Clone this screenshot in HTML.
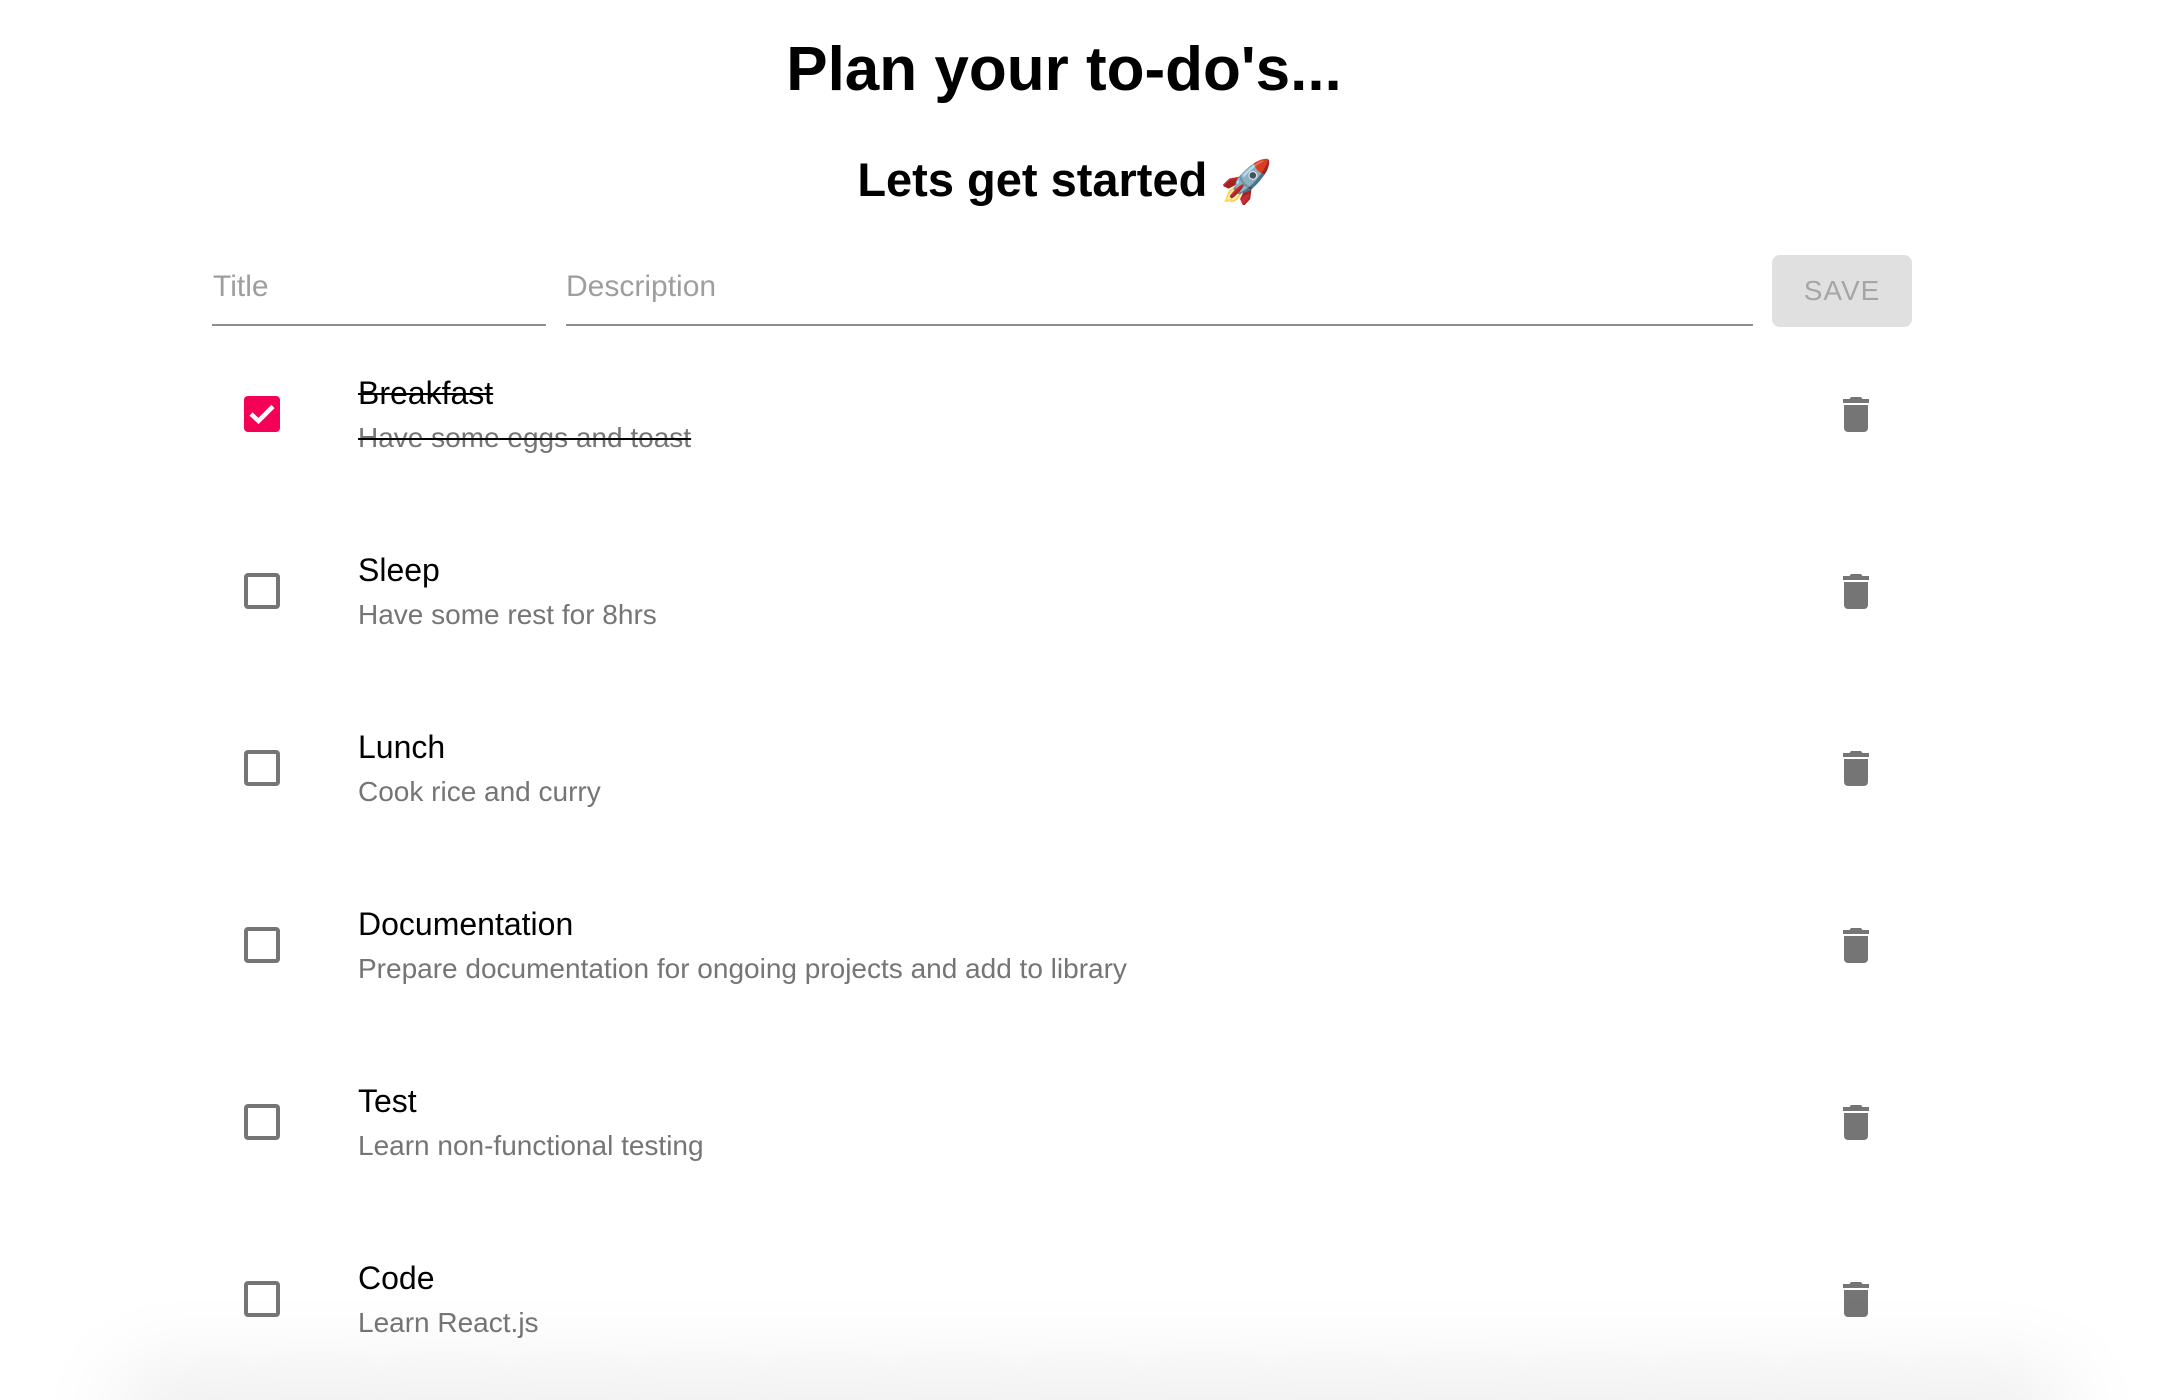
<!DOCTYPE html>
<html><head><meta charset="utf-8"><style>
*{margin:0;padding:0;box-sizing:border-box}
html,body{width:2184px;height:1400px;overflow:hidden;background:#fff;font-family:"Liberation Sans",Arial,sans-serif}
#w{position:relative;width:2184px;height:1400px;overflow:hidden}
.a{position:absolute;white-space:nowrap}
h1{position:absolute;left:-28px;width:2184px;text-align:center;top:34px;font-size:62px;font-weight:bold;color:#000;line-height:72px}
h2{position:absolute;left:-27px;width:2184px;text-align:center;top:152px;font-size:47px;font-weight:bold;color:#000;line-height:56px}
h2 span{font-size:42px}
.ph{font-size:30px;color:#9e9e9e;top:270px;line-height:34px}
.ul{position:absolute;height:2px;background:#8f8f8f;top:324px}
.btn{position:absolute;left:1772px;top:255px;width:140px;height:72px;background:#e0e0e0;border-radius:8px;color:#a6a6a6;font-size:28px;line-height:72px;text-align:center;letter-spacing:1px}
.cb{position:absolute;left:244px;width:36px;height:36px;border:4px solid #757575;border-radius:4px}
.cb.on{background:#f50057;border:none}
.t{left:358px;font-size:32px;color:#000;line-height:36px}
.d{left:358px;font-size:28px;color:#757575;line-height:32px}
.s{text-decoration:line-through;text-decoration-color:#000;text-decoration-thickness:2px}
.tr{position:absolute;left:1842px}
.shadow{position:absolute;left:150px;width:1884px;top:1402px;height:60px;background:#eee;box-shadow:0 0 90px 30px rgba(0,0,0,0.08)}
</style></head><body><div id="w">
<h1>Plan your to-do's...</h1>
<h2>Lets get started <span>🚀</span></h2>
<div class="a ph" style="left:213px">Title</div>
<div class="ul" style="left:212px;width:334px"></div>
<div class="a ph" style="left:566px">Description</div>
<div class="ul" style="left:566px;width:1187px"></div>
<div class="btn">SAVE</div>

<div class="cb on" style="top:396px"><svg width="36" height="36" viewBox="0 0 36 36"><path d="M7 18 L14.5 25 L29 10.5" stroke="#fff" stroke-width="4.5" fill="none"/></svg></div>
<div class="a t s" style="top:375px">Breakfast</div>
<div class="a d s" style="top:422px">Have some eggs and toast</div>

<div class="cb" style="top:573px"></div>
<div class="a t" style="top:552px">Sleep</div>
<div class="a d" style="top:599px">Have some rest for 8hrs</div>

<div class="cb" style="top:750px"></div>
<div class="a t" style="top:729px">Lunch</div>
<div class="a d" style="top:776px">Cook rice and curry</div>

<div class="cb" style="top:927px"></div>
<div class="a t" style="top:906px">Documentation</div>
<div class="a d" style="top:953px">Prepare documentation for ongoing projects and add to library</div>

<div class="cb" style="top:1104px"></div>
<div class="a t" style="top:1083px">Test</div>
<div class="a d" style="top:1130px">Learn non-functional testing</div>

<div class="cb" style="top:1281px"></div>
<div class="a t" style="top:1260px">Code</div>
<div class="a d" style="top:1307px">Learn React.js</div>

<svg class="tr" style="top:396px" width="28" height="36" viewBox="0 0 28 36"><path d="M9 1h10l1.5 2H27v4H1V3h6.5z" fill="#757575"/><path d="M2 9h24v23a4 4 0 0 1-4 4H6a4 4 0 0 1-4-4z" fill="#757575"/></svg>
<svg class="tr" style="top:573px" width="28" height="36" viewBox="0 0 28 36"><path d="M9 1h10l1.5 2H27v4H1V3h6.5z" fill="#757575"/><path d="M2 9h24v23a4 4 0 0 1-4 4H6a4 4 0 0 1-4-4z" fill="#757575"/></svg>
<svg class="tr" style="top:750px" width="28" height="36" viewBox="0 0 28 36"><path d="M9 1h10l1.5 2H27v4H1V3h6.5z" fill="#757575"/><path d="M2 9h24v23a4 4 0 0 1-4 4H6a4 4 0 0 1-4-4z" fill="#757575"/></svg>
<svg class="tr" style="top:927px" width="28" height="36" viewBox="0 0 28 36"><path d="M9 1h10l1.5 2H27v4H1V3h6.5z" fill="#757575"/><path d="M2 9h24v23a4 4 0 0 1-4 4H6a4 4 0 0 1-4-4z" fill="#757575"/></svg>
<svg class="tr" style="top:1104px" width="28" height="36" viewBox="0 0 28 36"><path d="M9 1h10l1.5 2H27v4H1V3h6.5z" fill="#757575"/><path d="M2 9h24v23a4 4 0 0 1-4 4H6a4 4 0 0 1-4-4z" fill="#757575"/></svg>
<svg class="tr" style="top:1281px" width="28" height="36" viewBox="0 0 28 36"><path d="M9 1h10l1.5 2H27v4H1V3h6.5z" fill="#757575"/><path d="M2 9h24v23a4 4 0 0 1-4 4H6a4 4 0 0 1-4-4z" fill="#757575"/></svg>

<div class="shadow"></div>
</div></body></html>
